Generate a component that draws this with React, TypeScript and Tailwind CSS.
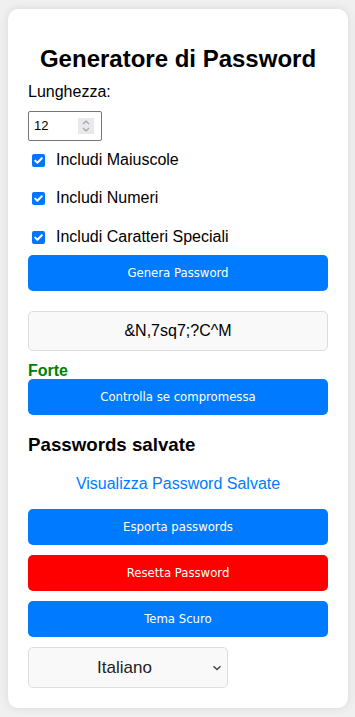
import React from "react";

const btnFont = { fontFamily: '"DejaVu Sans Condensed", "DejaVu Sans", sans-serif', fontStretch: "condensed" as const };

function Btn({ label, red = false, className = "" }: { label: string; red?: boolean; className?: string }) {
  return (
    <div
      className={`h-[36px] w-full rounded-[5px] flex items-center justify-center text-white text-[13px] ${red ? "bg-[#ff0000]" : "bg-[#007bff]"} ${className}`}
      style={btnFont}
    >
      {label}
    </div>
  );
}

function Check({ label, className = "" }: { label: string; className?: string }) {
  return (
    <div className={`flex items-center h-[18px] ${className}`}>
      <div className="ml-[4px] w-[13px] h-[13px] rounded-[2px] bg-[#0075ff] flex items-center justify-center">
        <svg width="11" height="11" viewBox="0 0 11 11">
          <path d="M2.2 5.6 L4.4 7.8 L8.8 3.2" fill="none" stroke="#fff" strokeWidth="2" strokeLinecap="round" strokeLinejoin="round" />
        </svg>
      </div>
      <span className="ml-[11px] text-[16px] leading-[18px] text-black">{label}</span>
    </div>
  );
}

export default function App() {
  return (
    <div className="min-h-screen bg-[#f0f0f0] pt-[9px] pb-[9px]" style={{ fontFamily: '"Liberation Sans", Arial, sans-serif' }}>
      <div className="ml-[8px] w-[340px] bg-white rounded-[10px] shadow-[0_0_10px_rgba(0,0,0,0.1)] px-[20px] pt-[20px] pb-[20px] flex flex-col">
        <h1 className="mt-[16px] text-[24px] leading-[28px] font-bold text-center text-black">Generatore di Password</h1>
        <div className="mt-[10px] text-[16px] leading-[18px] text-black">Lunghezza:</div>
        <div className="mt-[10px] w-[74px] h-[30px] border border-[#767676] rounded-[2px] flex items-center pl-[5px] pr-[7px]">
          <span className="text-[13px] text-black flex-1">12</span>
          <div className="w-[16px] h-[16px] bg-[#e9e9ed] flex flex-col items-center justify-center gap-[2px]">
            <svg width="8" height="5" viewBox="0 0 8 5">
              <path d="M1 4 L4 1 L7 4" fill="none" stroke="#a3a3a3" strokeWidth="1.2" />
            </svg>
            <svg width="8" height="5" viewBox="0 0 8 5">
              <path d="M1 1 L4 4 L7 1" fill="none" stroke="#a3a3a3" strokeWidth="1.2" />
            </svg>
          </div>
        </div>
        <Check label="Includi Maiuscole" className="mt-[10px]" />
        <Check label="Includi Numeri" className="mt-[20px]" />
        <Check label="Includi Caratteri Speciali" className="mt-[21px]" />
        <Btn label="Genera Password" className="mt-[9px]" />
        <div className="mt-[20px] h-[40px] w-full bg-[#f9f9f9] border border-[#dddddd] rounded-[5px] flex items-center justify-center text-[16px] text-black">
          &amp;N,7sq7;?C^M
        </div>
        <div className="mt-[12px] text-[16px] leading-[16px] font-bold text-[#008000]">Forte</div>
        <Btn label="Controlla se compromessa" />
        <h3 className="mt-[19px] text-[18.72px] leading-[22px] font-bold text-black">Passwords salvate</h3>
        <div className="mt-[19px] text-[16px] leading-[18px] text-center text-[#007bff]">Visualizza Password Salvate</div>
        <Btn label="Esporta passwords" className="mt-[16px]" />
        <Btn label="Resetta Password" red className="mt-[10px]" />
        <Btn label="Tema Scuro" className="mt-[10px]" />
        <div className="mt-[10px] w-[200px] h-[41px] bg-[#f9f9f9] border border-[#dddddd] rounded-[5px] flex items-center pl-[10px] pr-[5px]">
          <span className="flex-1 text-center text-[17px] text-[#222222]">Italiano</span>
          <svg width="10" height="6" viewBox="0 0 10 6" className="ml-[2px]">
            <path d="M1.5 1.2 L5 4.6 L8.5 1.2" fill="none" stroke="#444" strokeWidth="1.4" />
          </svg>
        </div>
      </div>
    </div>
  );
}
